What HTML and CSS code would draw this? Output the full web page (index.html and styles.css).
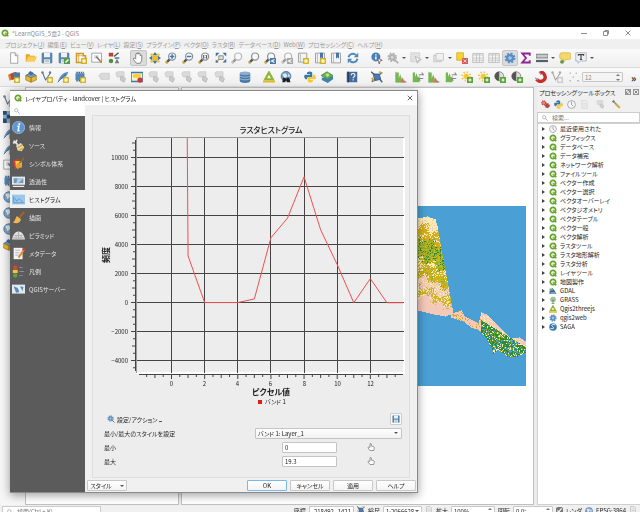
FILE: index.html
```html
<!DOCTYPE html>
<html lang="ja">
<head>
    <meta charset="UTF-8">
    <meta name="viewport" content="width=device-width, initial-scale=1.0">
    <title>LearnQGIS_5章2 - QGIS</title>
    <link rel="stylesheet" href="styles.css">
</head>
<body>
    <svg class="sprite" aria-hidden="true">
        <symbol id="qgis" viewBox="0 0 16 16"><circle cx="8" cy="8" r="5.4" fill="#fff" stroke="#62a52c" stroke-width="3.4"/><path d="M8 8l6.5 6.5" stroke="#62a52c" stroke-width="3.4"/><path d="M8 7.500l3.500 3.500" stroke="#e5a52e" stroke-width="2"/></symbol>
        <symbol id="new" viewBox="0 0 16 16"><path d="M3.500 1h6l3.500 3.500V15h-9.500z" fill="#fff" stroke="#8c8c8c"/><path d="M9.500 1v4H13" fill="#ddd" stroke="#8c8c8c"/></symbol>
        <symbol id="open" viewBox="0 0 16 16"><path d="M1 13V3h5l1 2h6v3" fill="#e0a72c"/><path d="M1 13l3-7h12l-3 7z" fill="#f8cc57"/></symbol>
        <symbol id="save" viewBox="0 0 16 16"><path d="M1.500 1.500h13v13h-13z" fill="#5b88b2" stroke="#4b7297"/><path d="M4 1h8v6H4zM4 9.500h8V15H4z" fill="#eef2f5"/><path d="M5 11h6M5 13h6" stroke="#9aa" /></symbol>
        <symbol id="saveas" viewBox="0 0 16 16"><use href="#save"/><path d="M8 8h8v8H8z" fill="#559a50"/><path d="M10 14l4-4" stroke="#fff" stroke-width="2"/></symbol>
        <symbol id="layout" viewBox="0 0 16 16"><path d="M2 2h9v3h3v9H2z" fill="#fff" stroke="#c99c28" stroke-width="2"/><path d="M2 5h9M5 2v12" stroke="#c99c28"/><use href="#plus"/></symbol>
        <symbol id="plus" viewBox="0 0 16 16"><path d="M8.500 8.500h7v7h-7z" fill="#e8c62e" stroke="#c5a018"/><path d="M12 9.500v5M9.500 12h5" stroke="#fff" stroke-width="1.500"/></symbol>
        <symbol id="manager" viewBox="0 0 16 16"><path d="M1 1.500h13v12H1z" fill="#fff" stroke="#8a8a8a"/><path d="M4 4h6v5H4z" fill="#d5dde3"/><path d="M7 6l7 8" stroke="#777" stroke-width="2"/><path d="M11 13l4-3" stroke="#d9a92b" stroke-width="2"/></symbol>
        <symbol id="style" viewBox="0 0 16 16"><path d="M1 1h6v5H1z" fill="#c14133"/><path d="M8 6l6-5" stroke="#555" stroke-width="2"/><circle cx="4" cy="12" r="3" fill="#518f45"/><path d="M9 15l3-6 3 6z" fill="#777"/><path d="M9 8h6" stroke="#4277aa" stroke-width="2"/></symbol>
        <symbol id="hand" viewBox="0 0 16 16"><path d="M5 9V3c0-1.500 2-1.500 2 0V2c0-1.500 2-1.500 2 0v1c0-1.500 2-1.500 2 0v2c0-1.500 2-1.500 2 0v6l-2 4H6L2 10c-1-2 1-2 3-1z" fill="#fff" stroke="#666"/></symbol>
        <symbol id="point" viewBox="0 0 16 16"><path d="M6 9V2c0-1.500 2.500-1.500 2.500 0v4l5 1.500c1 .5 1 1.500 1 2.500l-1 5H6L2 10c-1-2 2-2 4-1z" fill="#fff" stroke="#777" stroke-width="1.500"/></symbol>
        <symbol id="pan" viewBox="0 0 16 16"><path d="M8 0l3 4H5zM8 16l3-4H5zM0 8l4-3v6zM16 8l-4-3v6z" fill="#4775a5"/><path d="M5 5h6v6H5z" fill="#edc52d" stroke="#c99d1d"/><path d="M2 2h3v3H2zM11 2h3v3h-3zM2 11h3v3H2zM11 11h3v3h-3z" fill="#e6bf35"/></symbol>
        <symbol id="lens" viewBox="0 0 16 16"><path d="M6.500 9.500L1.500 14.500" stroke="#555" stroke-width="3"/><path d="M3 13l-2 2" stroke="#dcb030" stroke-width="3"/><circle cx="9.500" cy="6" r="4.700" fill="#f7fafc" stroke="#8b8f91" stroke-width="1.600"/></symbol>
        <symbol id="zoomin" viewBox="0 0 16 16"><use href="#lens"/><path d="M9.500 3v6M6.500 6h6" stroke="#4277aa" stroke-width="2"/></symbol>
        <symbol id="zoomout" viewBox="0 0 16 16"><use href="#lens"/><path d="M6.500 6h6" stroke="#4277aa" stroke-width="2"/></symbol>
        <symbol id="zoomone" viewBox="0 0 16 16"><use href="#lens"/><path d="M7.500 4v5M11.500 4v5M9.500 4.500v1M9.500 7v1" stroke="#444" stroke-width="1.200"/></symbol>
        <symbol id="zoomlast" viewBox="0 0 16 16"><use href="#lens"/><path d="M8 8h8v8H8z" fill="#4779ad"/><path d="M14 10l-4 2 4 2" fill="none" stroke="#fff" stroke-width="1.500"/></symbol>
        <symbol id="zoomfull" viewBox="0 0 16 16"><path d="M5 5h6v5H5z" fill="#d8dddf" stroke="#777"/><path d="M5 10l-4 4" stroke="#d4a529" stroke-width="2"/><path d="M1 1h5L1 6zM15 1v5l-5-5zM15 14v-5l-5 5zM1 10v4h4z" fill="#3d70a4"/></symbol>
        <symbol id="mapnew" viewBox="0 0 16 16"><path d="M2 1.500h11v12H2z" fill="#f4f4f1" stroke="#898989"/><path d="M4.500 2v11" stroke="#aaa"/><use href="#plus"/></symbol>
        <symbol id="booknew" viewBox="0 0 16 16"><use href="#bookmark"/><use href="#plus"/></symbol>
        <symbol id="bookmark" viewBox="0 0 16 16"><path d="M2 1.500h12v13H2z" fill="#f4f4f4" stroke="#888"/><path d="M4.500 2v12" stroke="#aaa"/><path d="M8 1h4v8l-2-2-2 2z" fill="#4676a8"/></symbol>
        <symbol id="refresh" viewBox="0 0 16 16"><path d="M2 7a6 6 0 0 1 10-3M14 9a6 6 0 0 1-10 3" fill="none" stroke="#4d86bc" stroke-width="2.600"/><path d="M15 1v6H9zM1 15V9h6z" fill="#4d86bc"/></symbol>
        <symbol id="identify" viewBox="0 0 16 16"><circle cx="6.500" cy="6.500" r="6" fill="#477fb7"/><path d="M6.500 6v4M6.500 3v1.500" stroke="#fff" stroke-width="2"/><path d="M9 8l6 3-3 1-1 4z" fill="#fff" stroke="#555"/></symbol>
        <symbol id="gear" viewBox="0 0 16 16"><circle cx="8" cy="8" r="5.800" fill="none" stroke="#5b8fc4" stroke-width="3" stroke-dasharray="2.600 1.950"/><circle cx="8" cy="8" r="3.800" fill="#a9c7e6" stroke="#5b8fc4" stroke-width="3"/></symbol>
        <symbol id="gearfind" viewBox="0 0 16 16"><use href="#gear" width="14" height="14"/><path d="M10 10l5 5" stroke="#777" stroke-width="2"/></symbol>
        <symbol id="select" viewBox="0 0 16 16"><path d="M1 1h12v12H1z" fill="#d8d8ce" stroke="#999" stroke-dasharray="2 1"/><path d="M7 6l8 4-4 1-1 4z" fill="#fff" stroke="#777"/></symbol>
        <symbol id="deselect" viewBox="0 0 16 16"><path d="M1 1h9v10H1z" fill="#f3d532" stroke="#d1a81c"/><path d="M8 8h8v8H8z" fill="#d95b55"/><path d="M10 10l4 4M14 10l-4 4" stroke="#fff"/></symbol>
        <symbol id="copy" viewBox="0 0 16 16"><path d="M1 4h10v9H1z" fill="#ddd" stroke="#999"/><path d="M4 2h10v9H4z" fill="#eee" stroke="#999"/></symbol>
        <symbol id="table" viewBox="0 0 16 16"><path d="M1 2h14v12H1z" fill="#f5f5f5" stroke="#888"/><path d="M1 4h14M1 8h14M1 11h14M6 2v12M10 2v12" stroke="#999"/></symbol>
        <symbol id="sigma" viewBox="0 0 16 16"><path d="M13 5V2H3l5 6-5 6h10v-3" fill="none" stroke="#8c2393" stroke-width="2.400"/></symbol>
        <symbol id="ruler" viewBox="0 0 16 16"><path d="M0 3h16v5H0z" fill="#c4c9cd" stroke="#666"/><path d="M0 12h16" stroke="#54616c" stroke-width="3"/></symbol>
        <symbol id="tip" viewBox="0 0 16 16"><path d="M4 1h9q3 0 3 3v3q0 3-3 3h-4l-3 4V10H4Q1 10 1 7V4q0-3 3-3z" fill="#f4d86c" stroke="#d7b340"/><circle cx="4" cy="13" r="2.500" fill="#61974f"/></symbol>
        <symbol id="text" viewBox="0 0 16 16"><path d="M1 1h14v11H7l-3 3v-3H1z" fill="#eef2f5" stroke="#a0a9b0"/><path d="M4.500 5V3.500h7V5M8 3.500V10M6.500 10h3" fill="none" stroke="#444" stroke-width="1.500"/></symbol>
        <symbol id="layers" viewBox="0 0 16 16"><path d="M0 5l7-3 2 8-7 3z" fill="#d28235"/><path d="M3 4l8-3 2 8-8 3z" fill="#b9423b"/><path d="M7 2h9v9H7z" fill="#4779a9"/><use href="#plus"/></symbol>
        <symbol id="box" viewBox="0 0 16 16"><path d="M1 6l7-4 7 4-7 3z" fill="#76a0c9" stroke="#355c82"/><path d="M1 6v6l7 3V9zM8 9v6l7-3V6z" fill="#e7b93a" stroke="#a27b1b"/><path d="M7 0l5 3-4 3-4-3z" fill="#3d6f9f"/></symbol>
        <symbol id="vector" viewBox="0 0 16 16"><path d="M2 2l4 10 7-10" fill="none" stroke="#597083" stroke-width="1.400"/><circle cx="2" cy="2" r="1.600" fill="#657e91"/><circle cx="12" cy="2" r="1.600" fill="#657e91"/><use href="#plus"/></symbol>
        <symbol id="feather" viewBox="0 0 16 16"><path d="M1 15C3 7 8 2 15 1c-1 6-6 9-11 10z" fill="#5c91c2"/><path d="M1 15L12 4" stroke="#375b7b"/><use href="#plus"/></symbol>
        <symbol id="chip" viewBox="0 0 16 16"><path d="M2 3h12v9H2z" fill="#5387b8"/><path d="M3 2h10M3 13h9" stroke="#3b6186" stroke-width="2" stroke-dasharray="2 1"/><use href="#plus"/></symbol>
        <symbol id="label" viewBox="0 0 16 16"><path d="M1 6l3-3h11v8H4z" fill="#c9c9c6" stroke="#aaa"/></symbol>
        <symbol id="labelb" viewBox="0 0 16 16"><path d="M1 3l2-2h9v7H3z" fill="#c9c9c6" stroke="#aaa"/><path d="M8 7l6 3-2 5-5-3z" fill="#b3b3b3" stroke="#888"/></symbol>
        <symbol id="labelc" viewBox="0 0 16 16"><path d="M0 2h16v12H0z" fill="#f6f1d0" stroke="#4276a8" stroke-width="2"/><path d="M2 7l2-3h9v5H4z" fill="#f2d13d"/><circle cx="12" cy="12" r="3.500" fill="#cc3731"/></symbol>
        <symbol id="db" viewBox="0 0 16 16"><path d="M1 3v10c0 4 14 4 14 0V3z" fill="#4679ac"/><ellipse cx="8" cy="3" rx="7" ry="2.500" fill="#8caccb"/><path d="M1 6c0 3 14 3 14 0M1 9.500c0 3 14 3 14 0" fill="none" stroke="#b9cee2"/></symbol>
        <symbol id="tri" viewBox="0 0 16 16"><path d="M8 2l5 9H3z" fill="none" stroke="#8fb535" stroke-width="3"/><path d="M0 14h16" stroke="#e1bd30" stroke-width="3"/></symbol>
        <symbol id="globe" viewBox="0 0 16 16"><circle cx="8" cy="7" r="6.500" fill="#6e9ac4" stroke="#46698c"/><path d="M3 4l5-1 2 4-4 3zM11 3l3 4-3 1z" fill="#dce8f2"/><path d="M3 15l1-6h3l1 2 1-2h3l2 6H9v-2H7v2z" fill="#202020"/></symbol>
        <symbol id="world" viewBox="0 0 16 16"><circle cx="8" cy="8" r="7" fill="#7fa6ca" stroke="#46698c"/><path d="M3 4l5-1 2 4-4 4zM11 3l3 5-3 2z" fill="#dce8f2"/></symbol>
        <symbol id="python" viewBox="0 0 16 16"><path d="M1 5h7V4H4V2q4-3 7 0v5q0 1-1 1H6q-2 0-2 3H2q-3-3-1-6z" fill="#3b76ab"/><path d="M15 11H8v1h4v2q-4 3-7 0v-4q0-2 2-2h4q1 0 1-3h2q3 3 1 6z" fill="#f2c936"/></symbol>
        <symbol id="greenlayer" viewBox="0 0 16 16"><path d="M1 9v3l8 4 7-5V7z" fill="#417fb5"/><path d="M0 6l8-5 8 5-7 5z" fill="#65b34b" stroke="#3b8d3a"/><path d="M6 4l4-1 1 3-3 2z" fill="#c7e29c"/></symbol>
        <symbol id="help" viewBox="0 0 16 16"><path d="M1 1h14v14H1z" fill="#426c9b"/><path d="M3 1v14" stroke="#253c56" stroke-width="2"/><path d="M7 5.500c0-3 5-3 5 0 0 2-2.500 2-2.500 4M9.500 11v1.800" fill="none" stroke="#fff" stroke-width="1.500"/></symbol>
        <symbol id="sat" viewBox="0 0 16 16"><path d="M3 4h8l2 7-8 2z" fill="#4b7cae" stroke="#33597f"/><path d="M0 1l5 4M11 5l4-3M1 14l5-3M11 10l4 5" stroke="#53616d" stroke-width="2"/><path d="M11 1l4 2M1 9l3 5" stroke="#cca333" stroke-width="2"/></symbol>
        <symbol id="hist" viewBox="0 0 16 16"><path d="M1 15V2h4v8l2-6 2 8 6 2v1z" fill="#72b94a"/><path d="M1 1v14h14" fill="none" stroke="#8aaa72"/><path d="M9 8l5 7H8z" fill="#e66c62"/></symbol>
        <symbol id="histb" viewBox="0 0 16 16"><path d="M1 15V2h3v6l2-5 2 6 2-3v9z" fill="#73b650"/><path d="M9 5h6l-2-3M15 10H9l2 3" fill="none" stroke="#888" stroke-width="1.500"/></symbol>
        <symbol id="sun" viewBox="0 0 16 16"><circle cx="7" cy="7" r="3.500" fill="#f4c929"/><circle cx="7" cy="7" r="5.500" fill="none" stroke="#efc344" stroke-width="2.500" stroke-dasharray="1.800 2.500"/><path d="M8 8h8v8H8z" fill="#62a43b"/><path d="M12 10v4M10 12h4" stroke="#fff" stroke-width="1.500"/></symbol>
        <symbol id="contrast" viewBox="0 0 16 16"><circle cx="7" cy="7" r="6" fill="#ddd" stroke="#777"/><path d="M7 1a6 6 0 0 0 0 12z" fill="#555"/><path d="M8 8h8v8H8z" fill="#62a43b"/><path d="M12 10v4M10 12h4" stroke="#fff" stroke-width="1.500"/></symbol>
        <symbol id="magnet" viewBox="0 0 16 16"><path d="M2 11c5 6 14 1 11-5C12 2 9 1 7 3" fill="none" stroke="#cb2b2b" stroke-width="4.500"/><path d="M5 1l3 4M0 9l4 3" stroke="#999" stroke-width="1.500"/></symbol>
        <symbol id="dots" viewBox="0 0 16 16"><path d="M2 3h2M10 3h2M6 8h2M2 13h2M12 13h3" stroke="#999" stroke-width="2"/></symbol>
        <symbol id="search" viewBox="0 0 16 16"><circle cx="6" cy="6" r="4.500" fill="none" stroke="#888" stroke-width="1.400"/><path d="M9.500 9.500L15 15" stroke="#888" stroke-width="1.800"/></symbol>
        <symbol id="clock" viewBox="0 0 16 16"><circle cx="8" cy="8" r="7" fill="#f6f6f6" stroke="#999" stroke-width="1.400"/><path d="M8 3v5l3 3" fill="none" stroke="#888" stroke-width="1.400"/></symbol>
        <symbol id="page" viewBox="0 0 16 16"><path d="M3 1h7l3 3v11H3z" fill="#eee" stroke="#aaa"/><path d="M5 6h6M5 9h6M5 12h6" stroke="#bbb"/></symbol>
        <symbol id="wrench" viewBox="0 0 16 16"><path d="M3 3l10 10" stroke="#999" stroke-width="3"/><path d="M7 8l7 6" stroke="#dcae2e" stroke-width="3"/><path d="M1 4l3-3" stroke="#777" stroke-width="3"/></symbol>
        <symbol id="gears" viewBox="0 0 16 16"><circle cx="5" cy="5" r="3.500" fill="#e18b84" stroke="#c8433d" stroke-width="2.500" stroke-dasharray="2 1"/><circle cx="11" cy="10" r="3.500" fill="#c8433d" stroke="#a93733" stroke-width="2" stroke-dasharray="2 1"/></symbol>
        <symbol id="info" viewBox="0 0 16 16"><circle cx="8" cy="8" r="7.500" fill="#5c97d2" stroke="#9bc0e5"/><path d="M6.500 6.500h2L7.500 12h2" fill="none" stroke="#fff" stroke-width="1.800"/><circle cx="9" cy="3.800" r="1.300" fill="#fff"/></symbol>
        <symbol id="source" viewBox="0 0 16 16"><path d="M2 2l5 5M1 5l4-1 1-3" stroke="#e5e5e5" stroke-width="2" fill="none"/><path d="M5 8l6-3 4 5-3 5-5-1z" fill="#e4dfc5"/><path d="M7 11l6-4M9 14l5-3" stroke="#d6ab32" stroke-width="2"/></symbol>
        <symbol id="brushes" viewBox="0 0 16 16"><path d="M1 5l7-3 3 9-7 4z" fill="#d53f2d"/><path d="M4 5h8v8H5z" fill="#efcf3e"/><path d="M15 1L8 9" stroke="#9b612b" stroke-width="2"/><path d="M4 10l5-3 3 4-5 4z" fill="#e69b3b"/></symbol>
        <symbol id="alpha" viewBox="0 0 16 16"><path d="M0 2h16v10H0z" fill="#e4ebf2"/><path d="M2 4h12v6H2z" fill="#7398bd"/><path d="M7 4h7L8 10H5z" fill="#b9cde0"/><path d="M1 14h14" stroke="#eee" stroke-width="1.500"/></symbol>
        <symbol id="histogram" viewBox="0 0 16 16"><path d="M0 2h16v12H0z" fill="#9ac7ea"/><path d="M2 4v8h13M3 6l3 4 3-3 4 4" fill="none" stroke="#5a93c1"/></symbol>
        <symbol id="brush" viewBox="0 0 16 16"><path d="M15 1L9 8" stroke="#9a6530" stroke-width="2.500"/><path d="M6 6l5 4c-1 5-5 6-10 4 3-2 3-5 5-8z" fill="#eeb650"/></symbol>
        <symbol id="pyramid" viewBox="0 0 16 16"><path d="M0 13c1-6 4-10 8-10s7 4 8 10z" fill="#e0e0e0"/><path d="M3 8h10M1 11h14M5 8v5M8 3v10M11 8v5" stroke="#aaa"/></symbol>
        <symbol id="meta" viewBox="0 0 16 16"><path d="M2 1h11v14H2z" fill="#f3f3f3"/><path d="M4 4h6M4 7h5M4 10h4" stroke="#aaa"/><path d="M15 3l-7 10" stroke="#e18a32" stroke-width="2.500"/><path d="M15 2l-1 2" stroke="#d33e35" stroke-width="3"/></symbol>
        <symbol id="legend" viewBox="0 0 16 16"><circle cx="4" cy="3" r="2.600" fill="#db4335"/><path d="M1 6h6v4H1z" fill="#edc937"/><circle cx="4" cy="13" r="2.600" fill="#63a345"/><path d="M9 3h4M9 8h6M9 13h4" stroke="#999"/></symbol>
        <symbol id="server" viewBox="0 0 16 16"><path d="M0 2h16v11H0z" fill="#e2e9ef"/><path d="M2 4l5 2 2 5-4 1zM10 4l4 1-1 5z" fill="#5889b8"/></symbol>
        <symbol id="gdal" viewBox="0 0 16 16"><path d="M1 9L7 2l4 5 4 7H1z" fill="#376993"/><path d="M1 3h7v4H1z" fill="#75a58d"/><path d="M3 12h10" stroke="#c4dbe9" stroke-width="2"/></symbol>
        <symbol id="grass" viewBox="0 0 16 16"><circle cx="8" cy="7" r="5" fill="#b9ceb5" stroke="#719a6c"/><path d="M8 5v10M5 7l3 3 3-3M5 15h6" fill="none" stroke="#66915f" stroke-width="1.500"/></symbol>
        <symbol id="saga" viewBox="0 0 16 16"><circle cx="8" cy="8" r="7.500" fill="#3b78b0"/><path d="M13 4c-5-3-10 0-6 3s3 5-4 4" fill="none" stroke="#fff" stroke-width="1.800"/></symbol>
        <symbol id="checker" viewBox="0 0 16 16"><path d="M0 0h16v16H0z" fill="#8fb1d0"/><path d="M0 0h5v5H0zM10 0h6v5h-6zM5 5h5v5H5zM0 10h5v6H0zM10 10h6v6h-6z" fill="#274f77"/></symbol>
    </svg>

    <div class="letterbox"></div>
    <header class="titlebar">
        <svg class="logo"><use href="#qgis"/></svg>
        <span class="title">*LearnQGIS_5章2 - QGIS</span>
        <div class="window-buttons">
            <button aria-label="最小化"><svg viewBox="0 0 8 8"><path d="M1 4.500h6"/></svg></button>
            <button aria-label="元に戻す"><svg viewBox="0 0 8 8"><path d="M1.500 2.500h4v4h-4zM3 2.500v-1h3.500v3.500h-1"/></svg></button>
            <button aria-label="閉じる"><svg viewBox="0 0 8 8"><path d="M1.500 1.500l5 5M6.500 1.500l-5 5"/></svg></button>
        </div>
    </header>
    <nav class="menubar">
        <button>プロジェクト(<u>J</u>)</button>
        <button>編集(<u>E</u>)</button>
        <button>ビュー(<u>V</u>)</button>
        <button>レイヤ(<u>L</u>)</button>
        <button>設定(<u>S</u>)</button>
        <button>プラグイン(<u>P</u>)</button>
        <button>ベクタ(<u>O</u>)</button>
        <button>ラスタ(<u>R</u>)</button>
        <button>データベース(<u>D</u>)</button>
        <button>Web(<u>W</u>)</button>
        <button>プロセッシング(<u>C</u>)</button>
        <button>ヘルプ(<u>H</u>)</button>
    </nav>

    <div class="toolbar">
        <div class="tools tools-file">
            <button aria-label="新規"><svg><use href="#new"/></svg></button>
            <button aria-label="開く"><svg><use href="#open"/></svg></button>
            <button aria-label="保存"><svg><use href="#save"/></svg></button>
            <button aria-label="別名で保存"><svg><use href="#saveas"/></svg></button>
            <button aria-label="新規レイアウト"><svg><use href="#layout"/></svg></button>
            <button aria-label="レイアウトマネージャ"><svg><use href="#manager"/></svg></button>
            <button aria-label="スタイルマネージャ"><svg><use href="#style"/></svg></button>
        </div>
        <div class="tools tools-nav">
            <button class="pressed" aria-label="地図移動"><svg><use href="#hand"/></svg></button>
            <button aria-label="選択部分に移動"><svg><use href="#pan"/></svg></button>
            <button aria-label="拡大"><svg><use href="#zoomin"/></svg></button>
            <button aria-label="縮小"><svg><use href="#zoomout"/></svg></button>
            <button aria-label="等倍"><svg><use href="#zoomone"/></svg></button>
            <button aria-label="全域表示"><svg><use href="#zoomfull"/></svg></button>
            <button disabled aria-label="選択にズーム"><svg><use href="#lens"/></svg></button>
            <button aria-label="レイヤにズーム"><svg><use href="#lens"/></svg></button>
            <button aria-label="前の表示"><svg><use href="#zoomlast"/></svg></button>
            <button disabled aria-label="次の表示"><svg><use href="#zoomlast"/></svg></button>
            <button aria-label="新規マップ"><svg><use href="#mapnew"/></svg></button>
            <button aria-label="新規ブックマーク"><svg><use href="#booknew"/></svg></button>
            <button aria-label="ブックマーク"><svg><use href="#bookmark"/></svg></button>
            <button aria-label="再読み込み"><svg><use href="#refresh"/></svg></button>
        </div>
        <div class="tools tools-attributes">
            <button aria-label="地物情報"><svg><use href="#identify"/></svg></button>
            <button disabled class="drop" aria-label="アクション"><svg><use href="#gearfind"/></svg></button>
            <button disabled class="drop" aria-label="地物選択"><svg><use href="#select"/></svg></button>
            <button disabled class="drop" aria-label="値で選択"><svg><use href="#copy"/></svg></button>
            <button aria-label="選択解除"><svg><use href="#deselect"/></svg></button>
            <button disabled aria-label="属性テーブル"><svg><use href="#table"/></svg></button>
            <button disabled aria-label="フィールド計算機"><svg><use href="#table"/></svg></button>
            <button class="pressed" aria-label="プロセッシング"><svg><use href="#gear"/></svg></button>
            <button aria-label="統計"><svg><use href="#sigma"/></svg></button>
            <button class="drop" aria-label="測定"><svg><use href="#ruler"/></svg></button>
            <button aria-label="地図のヒント"><svg><use href="#tip"/></svg></button>
            <button class="drop" aria-label="注記"><svg><use href="#text"/></svg></button>
        </div>
    </div>

    <div class="toolbar">
        <div class="tools tools-5">
            <button aria-label="データソース"><svg><use href="#layers"/></svg></button>
            <button aria-label="GeoPackage"><svg><use href="#box"/></svg></button>
            <button aria-label="シェープファイル"><svg><use href="#vector"/></svg></button>
            <button aria-label="SpatiaLite"><svg><use href="#feather"/></svg></button>
            <button aria-label="一時レイヤ"><svg><use href="#chip"/></svg></button>
        </div>
        <div class="tools tools-8">
            <button disabled aria-label="ラベル"><svg><use href="#label"/></svg></button>
            <button disabled aria-label="ダイアグラム"><svg><use href="#labelb"/></svg></button>
            <button aria-label="ラベル強調"><svg><use href="#labelc"/></svg></button>
            <button disabled aria-label="ラベル固定"><svg><use href="#labelb"/></svg></button>
            <button disabled aria-label="ラベル表示"><svg><use href="#labelb"/></svg></button>
            <button disabled aria-label="ラベル移動"><svg><use href="#labelb"/></svg></button>
            <button disabled aria-label="ラベル回転"><svg><use href="#labelb"/></svg></button>
            <button disabled aria-label="ラベル変更"><svg><use href="#labelb"/></svg></button>
        </div>
        <div class="tools tools-1"><button aria-label="DBマネージャ"><svg><use href="#db"/></svg></button></div>
        <div class="tools tools-2">
            <button aria-label="Qgis2threejs"><svg><use href="#tri"/></svg></button>
            <button aria-label="MetaSearch"><svg><use href="#globe"/></svg></button>
        </div>
        <div class="tools tools-2">
            <button aria-label="Pythonコンソール"><svg><use href="#python"/></svg></button>
            <button aria-label="レイヤプラグイン"><svg><use href="#greenlayer"/></svg></button>
        </div>
        <div class="tools tools-1"><button aria-label="ヘルプ"><svg><use href="#help"/></svg></button></div>
        <div class="tools tools-1"><button aria-label="衛星"><svg><use href="#sat"/></svg></button></div>
        <div class="tools tools-8">
            <button aria-label="ヒストグラム1"><svg><use href="#hist"/></svg></button>
            <button aria-label="ヒストグラム2"><svg><use href="#histb"/></svg></button>
            <button aria-label="ヒストグラム3"><svg><use href="#hist"/></svg></button>
            <button aria-label="ヒストグラム4"><svg><use href="#histb"/></svg></button>
            <button aria-label="明るさを上げる"><svg><use href="#sun"/></svg></button>
            <button aria-label="明るさを下げる"><svg><use href="#sun"/></svg></button>
            <button aria-label="コントラストを上げる"><svg><use href="#contrast"/></svg></button>
            <button aria-label="コントラストを下げる"><svg><use href="#contrast"/></svg></button>
        </div>
        <div class="tools tools-3">
            <button aria-label="スナップ"><svg><use href="#magnet"/></svg></button>
            <button disabled aria-label="頂点"><svg><use href="#vector"/></svg></button>
            <button disabled aria-label="交点"><svg><use href="#dots"/></svg></button>
        </div>
        <span class="spin tolerance"><input type="text" value="12" disabled aria-label="許容範囲"><i class="arrows"></i></span>
        <button class="more" aria-label="その他">»</button>
    </div>

    <main class="workspace">
        <aside class="side-tools">
            <button aria-label="ベクタ追加"><svg><use href="#vector"/></svg></button>
            <button aria-label="ラスタ追加"><svg><use href="#checker"/></svg></button>
            <button aria-label="メッシュ追加"><svg><use href="#feather"/></svg></button>
            <button aria-label="CSV追加"><svg><use href="#feather"/></svg></button>
            <button aria-label="SpatiaLite追加"><svg><use href="#manager"/></svg></button>
            <button aria-label="PostGIS追加"><svg><use href="#chip"/></svg></button>
            <button aria-label="WMS追加"><svg><use href="#world"/></svg></button>
            <button aria-label="WCS追加"><svg><use href="#world"/></svg></button>
            <button aria-label="WFS追加"><svg><use href="#world"/></svg></button>
            <button aria-label="仮想レイヤ追加"><svg><use href="#box"/></svg></button>
        </aside>
        <section class="layer-panel"></section>
        <section class="map-view">
            <canvas id="map" width="337" height="180"></canvas>
        </section>
        <aside class="toolbox">
            <div class="dock-title">
                <span>プロセッシングツールボックス</span>
                <button aria-label="フロート"><svg viewBox="0 0 8 8"><path d="M.5.5h7v7h-7zM2 4l2-2h2v2L4 6H2z"/></svg></button>
                <button aria-label="閉じる"><svg viewBox="0 0 8 8"><path d="M.5.5h7v7h-7zM2 2l4 4M6 2L2 6"/></svg></button>
            </div>
            <div class="dock-tools">
                <button aria-label="モデル"><svg><use href="#gears"/></svg></button>
                <button aria-label="スクリプト"><svg><use href="#python"/></svg></button>
                <button aria-label="履歴"><svg><use href="#clock"/></svg></button>
                <button disabled aria-label="結果"><svg><use href="#page"/></svg></button>
                <button disabled class="apart" aria-label="編集"><svg><use href="#labelb"/></svg></button>
                <button class="apart" aria-label="オプション"><svg><use href="#wrench"/></svg></button>
            </div>
            <label class="search-box"><svg><use href="#search"/></svg><input type="text" placeholder="検索..." aria-label="検索"></label>
            <ul class="tree">
                <li><svg><use href="#clock"/></svg>最近使用された</li>
                <li><svg><use href="#qgis"/></svg>グラフィックス</li>
                <li><svg><use href="#qgis"/></svg>データベース</li>
                <li><svg><use href="#qgis"/></svg>データ補完</li>
                <li><svg><use href="#qgis"/></svg>ネットワーク解析</li>
                <li><svg><use href="#qgis"/></svg>ファイルツール</li>
                <li><svg><use href="#qgis"/></svg>ベクター作成</li>
                <li><svg><use href="#qgis"/></svg>ベクター選択</li>
                <li><svg><use href="#qgis"/></svg>ベクタオーバーレイ</li>
                <li><svg><use href="#qgis"/></svg>ベクタジオメトリ</li>
                <li><svg><use href="#qgis"/></svg>ベクタテーブル</li>
                <li><svg><use href="#qgis"/></svg>ベクタ一般</li>
                <li><svg><use href="#qgis"/></svg>ベクタ解析</li>
                <li><svg><use href="#qgis"/></svg>ラスタツール</li>
                <li><svg><use href="#qgis"/></svg>ラスタ地形解析</li>
                <li><svg><use href="#qgis"/></svg>ラスタ分析</li>
                <li><svg><use href="#qgis"/></svg>レイヤツール</li>
                <li><svg><use href="#qgis"/></svg>地図製作</li>
                <li><svg><use href="#gdal"/></svg>GDAL</li>
                <li><svg><use href="#grass"/></svg>GRASS</li>
                <li><svg><use href="#tri"/></svg>Qgis2threejs</li>
                <li><svg><use href="#gear"/></svg>qgis2web</li>
                <li><svg><use href="#saga"/></svg>SAGA</li>
            </ul>
        </aside>
    </main>

    <footer class="statusbar">
        <label class="search-box locator"><svg><use href="#search"/></svg><input type="text" placeholder="検索(Ctrl + K)" aria-label="検索"></label>
        <label for="coord">座標</label>
        <input class="coord" id="coord" type="text" value="-218492,-1421852">
        <svg><use href="#sat"/></svg>
        <label for="scale">縮尺</label>
        <span class="spin scale"><input id="scale" type="text" value="1:20666281"><i class="caret"></i></span>
        <svg><use href="#page"/></svg>
        <label for="magnify">拡大</label>
        <span class="spin magnify"><input id="magnify" type="text" value="100%"><i class="arrows"></i></span>
        <label for="rotation">回転</label>
        <span class="spin rotation"><input id="rotation" type="text" value="0.0°"><i class="arrows"></i></span>
        <label class="render"><input type="checkbox" checked>レンダ</label>
        <button class="crs"><svg><use href="#world"/></svg>EPSG:3864</button>
        <button class="crs" aria-label="メッセージ"><svg><use href="#page"/></svg></button>
    </footer>

    <div class="dialog" role="dialog" aria-label="レイヤプロパティ">
        <div class="dialog-title">
            <svg class="logo"><use href="#qgis"/></svg>
            <span>レイヤプロパティ - landcover | ヒストグラム</span>
            <button aria-label="閉じる"><svg viewBox="0 0 8 8"><path d="M1 1l6 6M7 1L1 7"/></svg></button>
        </div>
        <div class="dialog-body">
            <nav class="pages">
                <label class="search-box"><svg><use href="#search"/></svg><input type="text" aria-label="検索"></label>
                <button><svg><use href="#info"/></svg>情報</button>
                <button><svg><use href="#source"/></svg>ソース</button>
                <button><svg><use href="#brushes"/></svg>シンボル体系</button>
                <button><svg><use href="#alpha"/></svg>透過性</button>
                <button class="current"><svg><use href="#histogram"/></svg>ヒストグラム</button>
                <button><svg><use href="#brush"/></svg>描画</button>
                <button><svg><use href="#pyramid"/></svg>ピラミッド</button>
                <button><svg><use href="#meta"/></svg>メタデータ</button>
                <button><svg><use href="#legend"/></svg>凡例</button>
                <button><svg><use href="#server"/></svg>QGISサーバー</button>
            </nav>
            <div class="content">
                <div class="page">
                    <svg class="chart" id="chart" viewBox="0 0 316 297"></svg>
                    <div class="options">
                        <div class="row">
                            <button class="prefs"><svg><use href="#gearfind"/></svg>設定/アクション<i></i></button>
                            <button class="save" aria-label="画像として保存"><svg><use href="#save"/></svg></button>
                        </div>
                        <div class="row">
                            <label for="band">最小/最大のスタイルを設定</label>
                            <span class="select"><select id="band"><option>バンド 1: Layer_1</option></select></span>
                        </div>
                        <div class="row">
                            <label for="min">最小</label>
                            <span class="field"><input id="min" type="text" value="0"><button aria-label="最小を選ぶ"><svg><use href="#point"/></svg></button></span>
                        </div>
                        <div class="row">
                            <label for="max">最大</label>
                            <span class="field"><input id="max" type="text" value="19.3"><button aria-label="最大を選ぶ"><svg><use href="#point"/></svg></button></span>
                        </div>
                    </div>
                </div>
                <div class="actions">
                    <button class="style-menu">スタイル<i class="caret"></i></button>
                    <button class="default">OK</button>
                    <button>キャンセル</button>
                    <button>適用</button>
                    <button>ヘルプ</button>
                </div>
            </div>
        </div>
    </div>
    <script src="script.js"></script>
</body>
</html>
```

FILE: styles.css
```css
* {
    box-sizing: border-box;
}
body {
    margin: 0;
    height: 100vh;
    overflow: hidden;
    display: flex;
    flex-direction: column;
    background-color: #f0f0f0;
    color: #222;
    font-family: "Noto Sans CJK JP", sans-serif;
    font-size: 6px;
    line-height: 9px;
    font-feature-settings: "palt";
}
button, input, select {
    font: inherit;
    font-feature-settings: inherit;
    color: inherit;
    margin: 0;
    padding: 0;
    border: none;
    background: none;
    min-width: 0;
}
input:focus {
    outline: none;
}
svg {
    display: block;
    flex: none;
}
.sprite {
    display: none;
}
.letterbox {
    flex: none;
    height: 27px;
    background-color: #000;
}

/* title and menus */
.titlebar {
    flex: none;
    height: 12px;
    display: flex;
    align-items: center;
    gap: 3px;
    padding: 0 8px 0 1px;
    background-color: #fff;
    color: #8c8c8c;
}
.logo {
    width: 8px;
    height: 8px;
}
.title {
    flex: 1;
}
.window-buttons {
    display: flex;
    gap: 14px;
}
.window-buttons svg {
    width: 8px;
    height: 8px;
    fill: none;
    stroke: #8c8c8c;
}
.menubar {
    flex: none;
    height: 10px;
    display: flex;
    align-items: center;
    gap: 3px;
    padding-left: 5px;
    color: #999;
    white-space: nowrap;
}
.menubar u {
    text-underline-offset: 1px;
}

/* toolbars */
.toolbar {
    flex: none;
    height: 19px;
    display: flex;
    align-items: center;
    gap: 8px;
    padding-left: 6px;
    background: linear-gradient(#fafafa, #efefef);
    border-bottom: 1px solid #dcdcdc;
}
.tools {
    flex: none;
    display: grid;
    grid-auto-flow: column;
    grid-auto-columns: 1fr;
}
.tools button {
    height: 16px;
    display: flex;
    align-items: center;
    justify-content: center;
    border: 1px solid transparent;
    border-radius: 2px;
}
.tools svg {
    width: 12px;
    height: 12px;
}
.tools button:disabled svg {
    opacity: 0.6;
    filter: grayscale(1);
}
.tools .pressed {
    background-color: #dcdcdc;
    border-color: #c4c4c4;
}
.tools-file { width: 116px; }
.tools-nav { width: 231px; }
.tools-attributes {
    display: flex;
}
.tools-attributes button {
    width: 16px;
}
.tools-attributes .drop {
    width: 23px;
    gap: 3px;
}
.drop::after, .caret {
    content: "";
    border: 2px solid transparent;
    border-top-color: #555;
    border-bottom: none;
}
.tools-1 { width: 17px; }
.tools-2 { width: 33px; }
.tools-3 { width: 49px; }
.tools-5 { width: 82px; }
.tools-8 { width: 132px; }
.spin {
    display: flex;
    align-items: center;
    height: 10px;
    padding: 0 2px;
    background-color: #fff;
    border: 1px solid #c8c8c8;
    border-radius: 1px;
}
.spin input {
    flex: 1;
    width: 10px;
}
.arrows {
    height: 7px;
    display: flex;
    flex-direction: column;
    justify-content: space-between;
}
.arrows::before, .arrows::after {
    content: "";
    border: 2px solid transparent;
    border-top: none;
    border-bottom-color: #777;
}
.arrows::after {
    border-top: 2px solid #777;
    border-bottom: none;
}
.tolerance {
    width: 41px;
    margin-left: -8px;
    background-color: #f4f4f4;
    color: #888;
}
.more {
    font-size: 10px;
    font-weight: bold;
}

/* workspace */
.workspace {
    flex: 1;
    min-height: 0;
    display: flex;
    background-color: #ececec;
}
.side-tools {
    width: 25px;
    padding: 8px 0 0 3px;
    display: flex;
    flex-direction: column;
    gap: 4px;
    background-color: #f6f6f6;
}
.side-tools button {
    height: 12px;
}
.side-tools svg {
    width: 12px;
    height: 12px;
}
.layer-panel {
    width: 154px;
    background-color: #fff;
    border: 1px solid #c0c0c0;
}
.map-view {
    flex: 1;
    margin-left: 2px;
    display: flex;
    align-items: center;
    justify-content: center;
    background-color: #fff;
    border: 1px solid #c0c0c0;
}
.toolbox {
    width: 103px;
    margin-left: 3px;
    display: flex;
    flex-direction: column;
    background-color: #f0f0f0;
}
.dock-title {
    height: 10px;
    display: flex;
    align-items: center;
    gap: 2px;
    padding: 0 1px 0 2px;
    white-space: nowrap;
}
.dock-title span {
    flex: 1;
}
.dock-title svg {
    width: 6px;
    height: 6px;
    fill: none;
    stroke: #666;
}
.dock-tools {
    height: 15px;
    display: flex;
    align-items: center;
    gap: 4px;
    padding-left: 4px;
}
.dock-tools svg {
    width: 9px;
    height: 9px;
}
.dock-tools button:disabled {
    opacity: 0.5;
}
.dock-tools .apart {
    margin-left: 3px;
}
.search-box {
    display: flex;
    align-items: center;
    gap: 4px;
    height: 11px;
    padding: 0 4px;
    background-color: #fff;
    border: 1px solid #ccc;
}
.search-box svg {
    width: 6px;
    height: 6px;
}
.search-box input {
    flex: 1;
    height: 9px;
}
.search-box input::placeholder {
    color: #777;
}
.tree {
    flex: 1;
    margin: 0;
    padding: 0 0 0 4px;
    list-style: none;
    background-color: #fff;
    border: 1px solid #d0d0d0;
    border-right: none;
}
.tree li {
    height: 9px;
    display: flex;
    align-items: center;
    gap: 3px;
    white-space: nowrap;
}
.tree li::before {
    content: "";
    border: 2px solid transparent;
    border-left: 3px solid #444;
    border-right: none;
    margin-right: 1px;
}
.tree svg {
    width: 8px;
    height: 8px;
}

/* status bar, its lower half runs off the screen */
.statusbar {
    flex: none;
    height: 7px;
    display: flex;
    align-items: flex-start;
    gap: 3px;
    padding: 1px 3px 0 2px;
    white-space: nowrap;
}
.statusbar > svg, .crs svg {
    width: 8px;
    height: 8px;
}
.statusbar .coord {
    width: 45px;
    height: 10px;
    padding: 0 2px;
    background-color: #fff;
    border: 1px solid #c8c8c8;
}
.locator {
    width: 99px;
    margin-right: auto;
}
.scale { width: 39px; }
.magnify { width: 44px; }
.rotation { width: 40px; }
.render, .crs {
    display: flex;
    align-items: center;
    gap: 3px;
}
.render input {
    width: 7px;
    height: 7px;
    accent-color: #777;
}

/* layer properties window */
.dialog {
    position: absolute;
    left: 10px;
    top: 90px;
    width: 408px;
    height: 403px;
    display: flex;
    flex-direction: column;
    background-color: #f0f0f0;
    border: 1px solid #8a8a8a;
    border-width: 1px 1px 1px 0;
    box-shadow: 0 2px 9px rgba(0, 0, 0, 0.4);
}
.dialog-title {
    height: 14px;
    display: flex;
    align-items: center;
    gap: 3px;
    padding: 0 4px;
    background-color: #fff;
}
.dialog-title span {
    flex: 1;
}
.dialog-title button svg {
    width: 6px;
    height: 6px;
    fill: none;
    stroke: #333;
}
.dialog-body {
    flex: 1;
    min-height: 0;
    display: flex;
}
.pages {
    width: 75px;
    display: flex;
    flex-direction: column;
    background-color: #5b5b5b;
    color: #e4e4e4;
}
.pages .search-box {
    margin-bottom: 2px;
    padding: 0 3px;
    border-color: #fff;
}
.pages button {
    height: 18px;
    display: flex;
    align-items: center;
    gap: 4px;
    padding-left: 2px;
}
.pages button svg {
    width: 13px;
    height: 13px;
}
.pages .current {
    background-color: #f0f0f0;
    color: #222;
}
.content {
    flex: 1;
    display: flex;
    flex-direction: column;
    padding: 10px 1px 1px 2px;
}
.page {
    flex: 1;
    margin: 0 6px 2px 5px;
    background-color: #ededed;
    border: 1px solid #dedede;
}
.chart {
    width: 100%;
}
.chart text {
    fill: #222;
}
.chart .heading {
    font-size: 8px;
    font-weight: 500;
}
.chart .axis-title {
    font-size: 8px;
    font-weight: bold;
}
.chart .grid {
    stroke: #444;
    stroke-width: 1;
}
.chart .tick {
    stroke: #444;
    stroke-width: 1;
}
.chart .band {
    fill: none;
    stroke: #f05050;
    stroke-width: 1;
}
.chart .frame-dark {
    fill: none;
    stroke: #999;
}
.chart .frame-light {
    fill: none;
    stroke: #fff;
    stroke-width: 2;
}
.options {
    padding: 0 7px 0 11px;
    display: flex;
    flex-direction: column;
    gap: 2px;
}
.row {
    display: grid;
    grid-template-columns: 151px 1fr;
    align-items: center;
    min-height: 12px;
}
.prefs {
    display: flex;
    align-items: center;
    gap: 2px;
    padding-left: 3px;
}
.prefs svg {
    width: 8px;
    height: 8px;
}
.prefs i {
    width: 3px;
    margin-top: 5px;
    border-top: 1px solid #555;
}
.save {
    justify-self: end;
    width: 12px;
    height: 12px;
    display: flex;
    align-items: center;
    justify-content: center;
    background-color: #fbfbfb;
    border: 1px solid #ccc;
    border-radius: 1px;
}
.save svg {
    width: 8px;
    height: 8px;
}
.select {
    display: grid;
    align-items: center;
}
.select select, .select::after {
    grid-area: 1 / 1;
}
.select select {
    appearance: none;
    height: 11px;
    padding-left: 2px;
    background: linear-gradient(#fff, #f2f2f2);
    border: 1px solid #c4c4c4;
    border-radius: 1px;
}
.select::after {
    content: "";
    justify-self: end;
    margin-right: 4px;
    border: 2px solid transparent;
    border-top-color: #555;
    border-bottom: none;
}
.field {
    display: flex;
    align-items: center;
    gap: 30px;
    padding-left: 27px;
}
.field input {
    width: 55px;
    height: 11px;
    padding-left: 2px;
    background-color: #fff;
    border: 1px solid #c4c4c4;
    border-radius: 1px;
}
.field svg {
    width: 8px;
    height: 8px;
}
.actions {
    display: flex;
    gap: 3px;
}
.actions button {
    width: 40px;
    height: 11px;
    line-height: 8px;
    background: linear-gradient(#fff, #f4f4f4);
    border: 1px solid #c8c8c8;
    border-radius: 1px;
}
.actions .default {
    border-color: #7ab8ea;
}
.actions .style-menu {
    display: flex;
    align-items: center;
    justify-content: center;
    gap: 8px;
    margin-right: auto;
}
```

FILE: script.js
```js
const SVG_NS = 'http://www.w3.org/2000/svg';
const chart = document.getElementById('chart');

// plot area inside the chart
const plot = { left: 43, right: 311, top: 22, bottom: 257 };
const xPos = value => 78 + value * 16.57;
const yPos = value => 187 - value * 0.0145;

function add(tag, attributes, text) {
    const node = document.createElementNS(SVG_NS, tag);
    Object.keys(attributes).forEach(key => node.setAttribute(key, attributes[key]));
    if (text) node.textContent = text;
    chart.appendChild(node);
}

function line(x1, y1, x2, y2, name) {
    add('path', { d: `M${x1} ${y1}L${x2} ${y2}`, class: name });
}

function drawAxes() {
    add('path', { d: `M${plot.left} ${plot.bottom}H${plot.right}V${plot.top}`, class: 'frame-light' });
    for (let value = 0; value <= 12; value += 2) {
        const x = Math.round(xPos(value)) + 0.5;
        line(x, plot.top, x, plot.bottom, 'grid');
        add('text', { x: x, y: 270, 'text-anchor': 'middle' }, String(value));
    }
    for (let value = -4000; value <= 10000; value += 2000) {
        const y = Math.round(yPos(value)) - 0.5;
        line(plot.left, y, plot.right, y, 'grid');
        add('text', { x: 35, y: y + 2, 'text-anchor': 'end' }, String(value).replace('-', '−'));
    }
    add('path', { d: `M${plot.left + 0.5} ${plot.bottom}V${plot.top - 0.5}H${plot.right}`, class: 'frame-dark' });

    line(42.5, 24, 42.5, 255, 'tick');
    for (let value = -4500; value <= 11000; value += 500) {
        const length = value % 2000 === 0 ? 4 : value % 1000 === 0 ? 3 : 2;
        line(42 - length, yPos(value) - 0.5, 42, yPos(value) - 0.5, 'tick');
    }
    line(46, 258.5, 310, 258.5, 'tick');
    for (let value = -1.5; value <= 13.5; value += 0.5) {
        const length = value % 2 === 0 ? 4 : value % 1 === 0 ? 3 : 2;
        line(xPos(value) + 0.5, 259, xPos(value) + 0.5, 259 + length, 'tick');
    }
}

function drawBand() {
    const values = [[0.95, 11380], [1, 3250], [2, 30], [4, 30], [5, 280], [6, 4500], [7, 5850],
        [8, 8700], [9, 5050], [10, 2650], [11, 20], [12, 1680], [13, 20], [14, 20]];
    const points = values.map(v => `${xPos(v[0]) + 0.5},${yPos(v[1])}`).join(' ');
    add('polyline', { points: points, class: 'band' });
}

drawAxes();
drawBand();
add('text', { x: 178, y: 17, 'text-anchor': 'middle', class: 'heading' }, 'ラスタヒストグラム');
add('text', { x: 178, y: 279, 'text-anchor': 'middle', class: 'axis-title' }, 'ピクセル値');
add('text', { transform: 'translate(16 139) rotate(-90)', 'text-anchor': 'middle', class: 'axis-title' }, '頻度');
add('rect', { x: 165, y: 284, width: 4, height: 4, fill: '#e01b1b' });
add('text', { x: 172, y: 288 }, 'バンド 1');

// land cover raster
const map = document.getElementById('map');
const ctx = map.getContext('2d');
const colors = {
    cream: '#fcecb4', pink: '#f5c9b8', ochre: '#d9a91f', yellow: '#c6b922',
    olive: '#93ab28', green: '#2f8a35', sea: '#4a9fd5'
};
const mainland = [[0, 10], [229, 12], [238, 10], [246, 13], [248, 20], [264, 107], [256, 110], [245, 108], [229, 104], [0, 104]];
const chain = [[262, 107], [272, 104], [275, 110], [289, 117], [292, 106], [297, 108], [311, 122], [322, 132],
    [330, 131], [336, 135], [336, 146], [329, 150], [318, 150], [308, 143], [304, 147], [298, 133],
    [290, 124], [282, 121], [274, 115], [262, 111]];

let seed = 7;
function random() {
    seed = (seed * 16807) % 2147483647;
    return seed / 2147483647;
}

function shape(points) {
    const path = new Path2D();
    points.forEach(p => path.lineTo(p[0], p[1]));
    path.closePath();
    return path;
}

function pick(mix) {
    return colors[mix[Math.floor(random() * mix.length)]];
}

function mainlandMix(x, y) {
    const wave = y + Math.sin(x / 6) * 3 + Math.sin(x / 3 + y / 4) * 3 + random() * 5 - (x - 240) / 5;
    if (wave < 26) return ['cream', 'cream', 'cream', 'pink', 'cream'];
    if (wave < 38) return ['ochre', 'ochre', 'ochre', 'yellow', 'cream'];
    if (wave < 60) return ['olive', 'olive', 'olive', 'yellow', 'yellow', 'green'];
    if (wave < 69) return ['cream', 'cream', 'ochre', 'yellow'];
    if (wave < 77) return ['olive', 'yellow', 'yellow', 'ochre'];
    if (wave < 86) return ['pink', 'pink', 'pink', 'cream'];
    if (wave < 96) return ['yellow', 'yellow', 'ochre', 'pink', 'cream'];
    return ['pink'];
}

function chainMix(x, y) {
    if (x < 292) return ['pink', 'pink', 'pink', 'pink', 'ochre'];
    if (y < 114 + (x - 292) * 0.6) return ['pink', 'pink', 'pink', 'cream'];
    return ['green', 'green', 'green', 'olive', 'sea', 'cream'];
}

function drawMap() {
    const land = shape(mainland);
    const islands = shape(chain);
    ctx.fillStyle = colors.sea;
    ctx.fillRect(0, 0, map.width, map.height);
    for (let y = 8; y < 154; y++) {
        for (let x = 200; x < map.width; x++) {
            if (ctx.isPointInPath(land, x, y)) {
                ctx.fillStyle = pick(mainlandMix(x, y));
            } else if (ctx.isPointInPath(islands, x, y)) {
                ctx.fillStyle = pick(chainMix(x, y));
            } else {
                continue;
            }
            ctx.fillRect(x, y, 1, 1);
        }
    }
}
drawMap();
```
